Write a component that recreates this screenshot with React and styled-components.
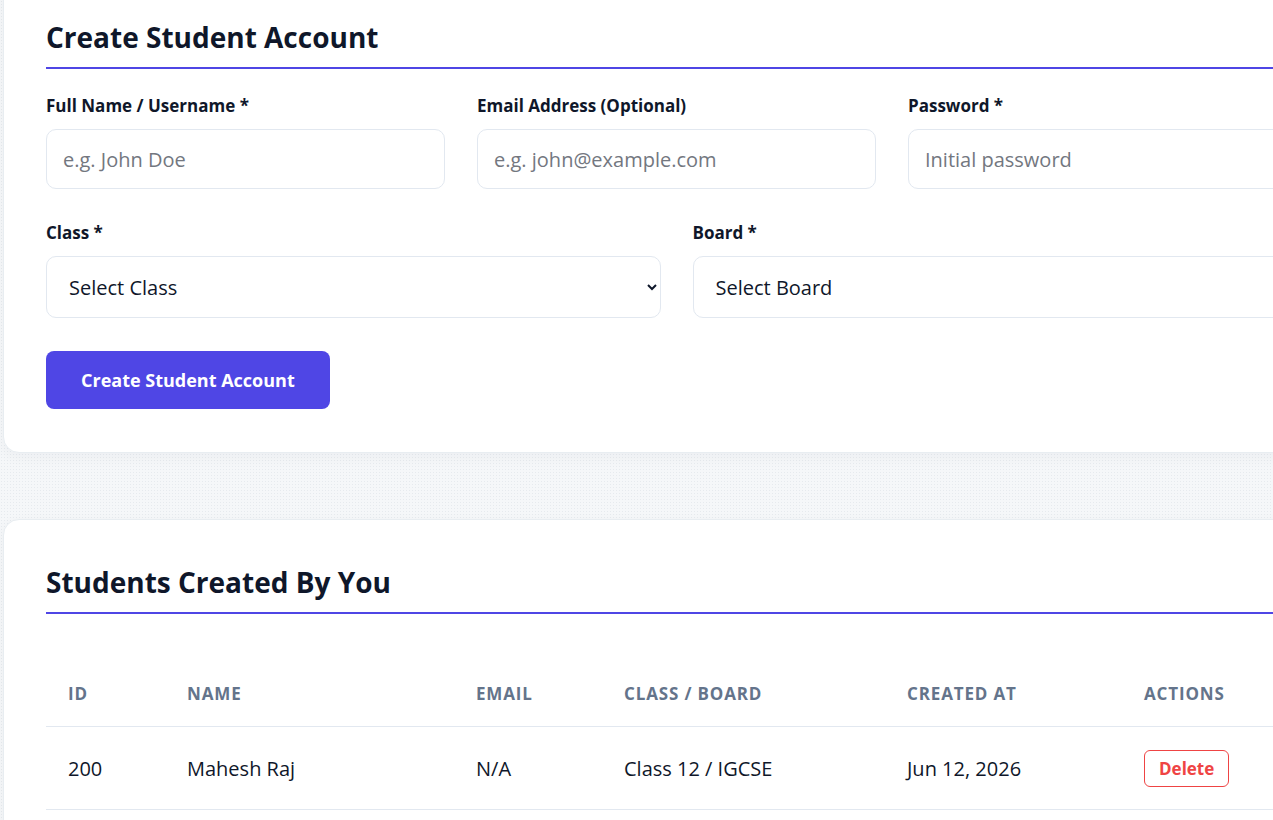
import React from "react"
import styled, { createGlobalStyle } from "styled-components"

const GlobalStyle = createGlobalStyle`
    html, body { margin: 0; padding: 0; overflow: hidden }
    body {
        font-family: "Open Sans", "Noto Sans", sans-serif;
        color: #0f172a;
        background-color: #f5f7f9;
        background-image: radial-gradient(#e6eaee 0.8px, transparent 0.8px);
        background-size: 3px 3px;
    }
`

const students = [
    { id: 200, name: "Mahesh Raj", email: "N/A", classBoard: "Class 12 / IGCSE", created: "Jun 12, 2026" },
]

const App = () => {
    return (
        <>
            <GlobalStyle />
            <Page>
                <Card>
                    <Heading>Create Student Account</Heading>
                    <Form onSubmit={(e) => e.preventDefault()}>
                        <Row $cols={3}>
                            <Field>
                                <Label>Full Name / Username *</Label>
                                <Input type="text" placeholder="e.g. John Doe" />
                            </Field>
                            <Field>
                                <Label>Email Address (Optional)</Label>
                                <Input type="email" placeholder="e.g. john@example.com" />
                            </Field>
                            <Field>
                                <Label>Password *</Label>
                                <Input type="password" placeholder="Initial password" />
                            </Field>
                        </Row>
                        <Row $cols={2}>
                            <Field>
                                <Label>Class *</Label>
                                <Select defaultValue="">
                                    <option value="">Select Class</option>
                                    <option>Class 10</option>
                                    <option>Class 11</option>
                                    <option>Class 12</option>
                                </Select>
                            </Field>
                            <Field>
                                <Label>Board *</Label>
                                <Select defaultValue="">
                                    <option value="">Select Board</option>
                                    <option>CBSE</option>
                                    <option>IGCSE</option>
                                </Select>
                            </Field>
                        </Row>
                        <div>
                            <PrimaryButton type="submit">Create Student Account</PrimaryButton>
                        </div>
                    </Form>
                </Card>

                <Card>
                    <Heading>Students Created By You</Heading>
                    <Table>
                        <colgroup>
                            <col style={{ width: 119 }} />
                            <col style={{ width: 289 }} />
                            <col style={{ width: 148 }} />
                            <col style={{ width: 283 }} />
                            <col style={{ width: 237 }} />
                            <col />
                        </colgroup>
                        <thead>
                            <tr>
                                <Th>ID</Th>
                                <Th>Name</Th>
                                <Th>Email</Th>
                                <Th>Class / Board</Th>
                                <Th>Created At</Th>
                                <Th>Actions</Th>
                            </tr>
                        </thead>
                        <tbody>
                            {students.map((s) => (
                                <tr key={s.id}>
                                    <Td>{s.id}</Td>
                                    <Td>{s.name}</Td>
                                    <Td>{s.email}</Td>
                                    <Td>{s.classBoard}</Td>
                                    <Td>{s.created}</Td>
                                    <Td><DeleteButton>Delete</DeleteButton></Td>
                                </tr>
                            ))}
                        </tbody>
                    </Table>
                </Card>
            </Page>
        </>
    )
}

const Page = styled.div`
    display: flex;
    flex-direction: column;
    gap: 66px;
    width: 1347px;
    margin-top: -26px;
    padding-left: 3px;
`

const Card = styled.section`
    background: #ffffff;
    border: 1px solid #e8edf1;
    border-radius: 16px;
    box-shadow: 0 4px 14px rgba(15, 23, 42, 0.04);
    padding: 42px 42px 43px;
`

const Heading = styled.h2`
    margin: 0;
    padding-top: 2px;
    font-size: 28px;
    line-height: 36px;
    font-weight: 700;
    color: #0f172a;
    padding-bottom: 12px;
    border-bottom: 2px solid #4f46e5;
`

const Form = styled.form`
    display: flex;
    flex-direction: column;
    gap: 33px;
    margin-top: 26px;
`

const Row = styled.div`
    display: grid;
    grid-template-columns: repeat(${(p) => p.$cols}, 1fr);
    column-gap: 32px;
`

const Field = styled.div`
    display: flex;
    flex-direction: column;
`

const Label = styled.label`
    font-size: 17px;
    line-height: 22px;
    font-weight: 700;
    color: #0f172a;
    margin-bottom: 12px;
`

const Input = styled.input`
    box-sizing: border-box;
    height: 60px;
    padding: 0 16px;
    font-family: inherit;
    font-size: 20px;
    color: #0f172a;
    border: 1px solid #e2e8f0;
    border-radius: 10px;
    background: #fff;
    outline: none;

    &::placeholder { color: #73777f }
`

const Select = styled.select`
    box-sizing: border-box;
    height: 62px;
    padding: 0 14px 0 18px;
    font-family: inherit;
    font-size: 20px;
    color: #0f172a;
    border: 1px solid #e2e8f0;
    border-radius: 10px;
    background: #fff;
    outline: none;
`

const PrimaryButton = styled.button`
    height: 58px;
    padding: 0 35px;
    border: none;
    border-radius: 8px;
    background: #4f46e5;
    color: #fff;
    font-family: inherit;
    font-size: 18px;
    font-weight: 700;
    cursor: pointer;
`

const Table = styled.table`
    width: 100%;
    margin-top: 48px;
    border-collapse: collapse;
    table-layout: fixed;
`

const Th = styled.th`
    text-align: left;
    padding: 20px 22px;
    font-size: 17px;
    line-height: 24px;
    font-weight: 700;
    letter-spacing: 0.05em;
    text-transform: uppercase;
    color: #64748b;
    border-bottom: 1px solid #e2e8f0;
`

const Td = styled.td`
    padding: 23px 22px 22px;
    font-size: 20px;
    line-height: 37px;
    color: #0f172a;
    border-bottom: 1px solid #e2e8f0;
    white-space: nowrap;
`

const DeleteButton = styled.button`
    display: inline-flex;
    align-items: center;
    vertical-align: top;
    height: 37px;
    padding: 0 14px;
    border: 1px solid #ef4444;
    border-radius: 6px;
    background: #fff;
    color: #ef4444;
    font-family: inherit;
    font-size: 17px;
    font-weight: 700;
    cursor: pointer;
`

export default App
